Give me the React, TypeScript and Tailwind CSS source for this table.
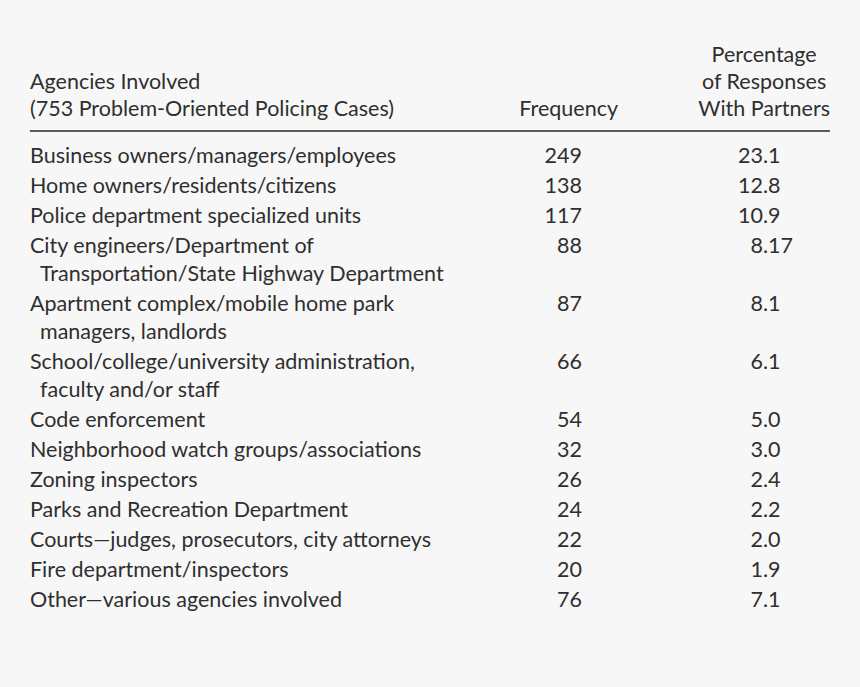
import React from "react";

type Row = { label: string[]; freq: string; pct: string };

const rows: Row[] = [
  { label: ["Business owners/managers/employees"], freq: "249", pct: "23.1" },
  { label: ["Home owners/residents/citizens"], freq: "138", pct: "12.8" },
  { label: ["Police department specialized units"], freq: "117", pct: "10.9" },
  {
    label: ["City engineers/Department of", "Transportation/State Highway Department"],
    freq: "88",
    pct: "8.17",
  },
  { label: ["Apartment complex/mobile home park", "managers, landlords"], freq: "87", pct: "8.1" },
  {
    label: ["School/college/university administration,", "faculty and/or staff"],
    freq: "66",
    pct: "6.1",
  },
  { label: ["Code enforcement"], freq: "54", pct: "5.0" },
  { label: ["Neighborhood watch groups/associations"], freq: "32", pct: "3.0" },
  { label: ["Zoning inspectors"], freq: "26", pct: "2.4" },
  { label: ["Parks and Recreation Department"], freq: "24", pct: "2.2" },
  { label: ["Courts\u2014judges, prosecutors, city attorneys"], freq: "22", pct: "2.0" },
  { label: ["Fire department/inspectors"], freq: "20", pct: "1.9" },
  { label: ["Other\u2014various agencies involved"], freq: "76", pct: "7.1" },
];

export default function App() {
  return (
    <div
      className="w-[860px] h-[687px] bg-[#f7f7f7] text-[#2f2f2f] text-[21.5px] pl-[30px] pt-[41px]"
      style={{ fontFamily: "Lato, 'Open Sans', sans-serif" }}
    >
      <div className="w-[800px]">
        {/* Header */}
        <div className="flex items-end leading-[27px] pb-[8px] border-b-2 border-[#5a5a5a]">
          <div className="w-[440px]">
            <div>Agencies Involved</div>
            <div>(753 Problem-Oriented Policing Cases)</div>
          </div>
          <div className="w-[170px] text-right pr-[22px]">Frequency</div>
          <div className="w-[190px] flex justify-end">
            <div className="text-center">
              <div>Percentage</div>
              <div>of Responses</div>
              <div>With Partners</div>
            </div>
          </div>
        </div>
        {/* Body */}
        <div className="pt-[7px] leading-[28px]">
          {rows.map((r, i) => {
            const [intPart, frac] = r.pct.split(".");
            return (
              <div key={i} className="flex items-start pt-[2px]">
                <div className="w-[440px]">
                  {r.label.map((l, j) => (
                    <div key={j} className={j > 0 ? "pl-[10px]" : ""}>
                      {l}
                    </div>
                  ))}
                </div>
                <div className="w-[170px] text-right pr-[58px]">{r.freq}</div>
                <div className="w-[190px] flex">
                  <span className="w-[123px] text-right">{intPart}</span>
                  <span>.{frac}</span>
                </div>
              </div>
            );
          })}
        </div>
      </div>
    </div>
  );
}
